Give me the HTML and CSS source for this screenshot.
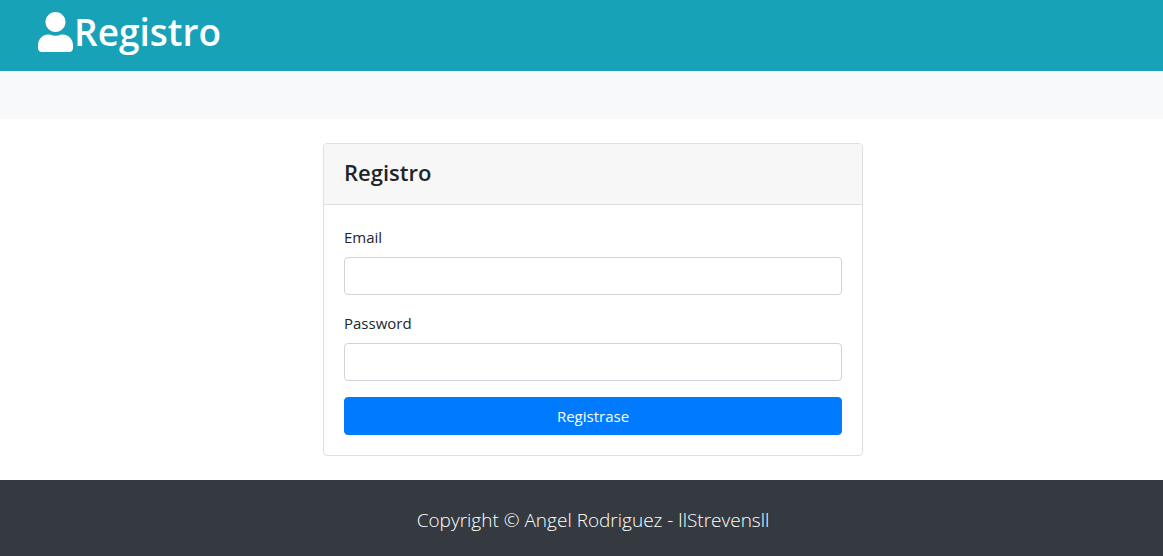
FILE: index.html
```html
<!DOCTYPE html>
<html lang="es">
<head>
<meta charset="utf-8">
<meta name="viewport" content="width=device-width, initial-scale=1">
<title>Registro</title>
<link rel="stylesheet" href="styles.css">
</head>
<body>
<header class="header">
  <h1 class="brand">
    <svg class="brand-icon" viewBox="0 0 448 512" aria-hidden="true"><path fill="currentColor" d="M224 256c70.700 0 128-57.300 128-128S294.700 0 224 0 96 57.300 96 128s57.300 128 128 128zm89.600 32h-16.700c-22.200 10.200-46.900 16-72.900 16s-50.600-5.800-72.900-16h-16.700C60.200 288 0 348.200 0 422.400V464c0 26.500 21.500 48 48 48h352c26.500 0 48-21.500 48-48v-41.600c0-74.200-60.200-134.400-134.400-134.400z"/></svg>
    <span>Registro</span>
  </h1>
</header>
<div class="subbar"></div>
<main class="main">
  <section class="card">
    <div class="card-header"><h2 class="card-title">Registro</h2></div>
    <form class="card-body">
      <div class="field">
        <label class="label" for="email">Email</label>
        <input class="input" type="email" id="email">
      </div>
      <div class="field">
        <label class="label" for="password">Password</label>
        <input class="input" type="password" id="password">
      </div>
      <button class="button" type="submit">Registrase</button>
    </form>
  </section>
</main>
<footer class="footer">
  <p class="copyright">Copyright © Angel Rodriguez - llStrevensll</p>
</footer>
</body>
</html>
```
FILE: styles.css
```css
*, *::before, *::after { box-sizing: border-box; }

body {
  display: flex;
  flex-direction: column;
  min-height: 100vh;
  margin: 0;
  background: #fff;
  color: #212529;
  font-family: "Segoe UI", "Open Sans", "Noto Sans", sans-serif;
  font-size: 15px;
  line-height: 24px;
}

.header {
  padding: 8px 38px 15px;
  background: #17a2b8;
  color: #fff;
}

.brand {
  display: flex;
  align-items: center;
  gap: 1px;
  margin: 0;
  font-size: 37px;
  font-weight: 600;
  line-height: 48px;
}

.brand-icon { width: 35px; height: 40px; }

.subbar { height: 48px; background: #f8f9fa; }

.main { padding: 24px 0 24px 23px; }

.card {
  width: 100%;
  max-width: 540px;
  margin: 0 auto;
  border: 1px solid #dfdfdf;
  border-radius: 4px;
  overflow: hidden;
}

.card-header {
  padding: 12px 20px 16px;
  border-bottom: 1px solid #dfdfdf;
  background: #f7f7f7;
}

.card-title {
  margin: 0;
  font-size: 22px;
  font-weight: 600;
  line-height: 32px;
}

.card-body { padding: 20px; }

.field { margin-bottom: 16px; }

.label { display: block; margin-bottom: 8px; }

.input {
  display: block;
  width: 100%;
  height: 38px;
  padding: 6px 12px;
  border: 1px solid #ced4da;
  border-radius: 4px;
  background: #fff;
  color: #495057;
  font: inherit;
}

.button {
  display: block;
  width: 100%;
  padding: 6px 12px;
  border: 1px solid #007bff;
  border-radius: 4px;
  background: #007bff;
  color: #fff;
  font: inherit;
  text-align: center;
}

.footer {
  flex: 1;
  padding: 24px 0 20px 23px;
  background: #343a40;
  color: #fff;
  text-align: center;
}

.copyright {
  margin: 0;
  font-size: 19px;
  font-weight: 300;
  line-height: 32px;
}
```
